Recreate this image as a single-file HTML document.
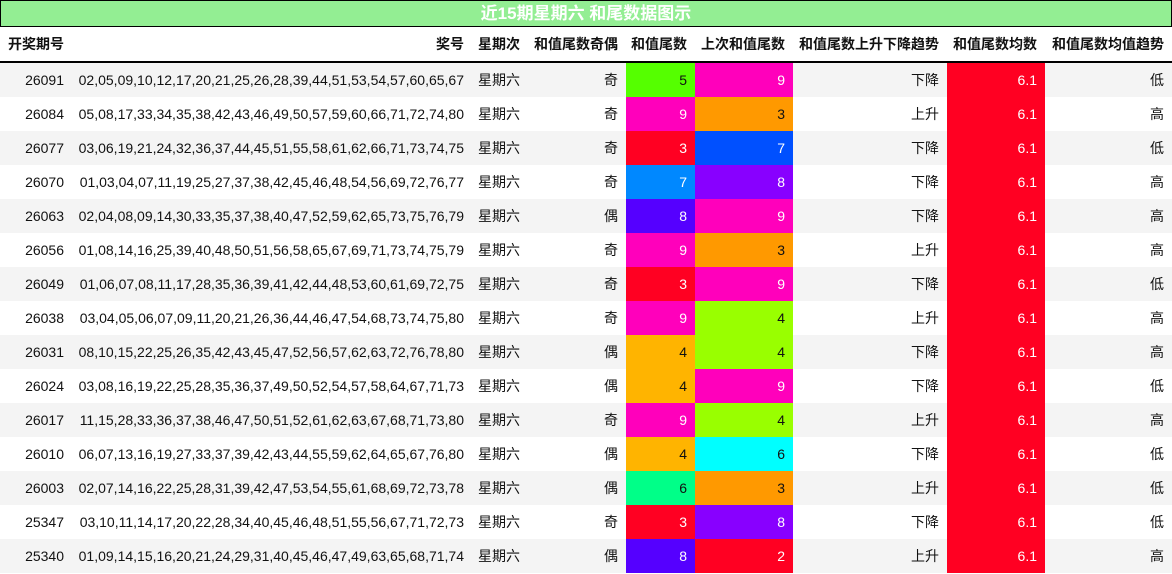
<!DOCTYPE html>
<html><head><meta charset="utf-8"><style>
body{margin:0;width:1172px;height:574px;overflow:hidden;background:#fff;font-family:"Liberation Sans","Noto Sans CJK SC",sans-serif;font-size:14px;color:#111}
.t{position:absolute;left:0;top:0;width:1170px;height:25px;background:#93ee93;border:1px solid #000;color:#fff;font-weight:bold;font-size:17px;text-align:center;line-height:26px}
table{position:absolute;left:0;top:27px;border-collapse:collapse;table-layout:fixed;width:1172px}
th{height:34px;font-weight:bold;font-size:14px;text-align:right;padding:0 8px 0 0;border-bottom:2px solid #000;white-space:nowrap}
td{height:34px;padding:0 8px 0 0;text-align:right;white-space:nowrap}
tr:nth-child(odd) td{background:#f4f4f4}
tr td.w{color:#fff}
td.c{text-align:center;padding:0}
</style></head><body>
<div class="t">近15期星期六 和尾数据图示</div>
<table>
<colgroup><col style="width:72px"><col style="width:400px"><col style="width:54px"><col style="width:100px"><col style="width:69px"><col style="width:98px"><col style="width:154px"><col style="width:98px"><col style="width:127px"></colgroup>
<thead><tr><th style="text-align:left;padding-left:8px">开奖期号</th><th>奖号</th><th class="c" style="text-align:center;padding:0">星期次</th><th>和值尾数奇偶</th><th>和值尾数</th><th>上次和值尾数</th><th>和值尾数上升下降趋势</th><th>和值尾数均数</th><th>和值尾数均值趋势</th></tr></thead>
<tbody>
<tr><td>26091</td><td>02,05,09,10,12,17,20,21,25,26,28,39,44,51,53,54,57,60,65,67</td><td class="c">星期六</td><td>奇</td><td style="background:#5f0!important">5</td><td class="w" style="background:#f0b!important">9</td><td>下降</td><td class="w" style="background:#f02!important">6.1</td><td>低</td></tr>
<tr><td>26084</td><td>05,08,17,33,34,35,38,42,43,46,49,50,57,59,60,66,71,72,74,80</td><td class="c">星期六</td><td>奇</td><td class="w" style="background:#f0b!important">9</td><td style="background:#f90!important">3</td><td>上升</td><td class="w" style="background:#f02!important">6.1</td><td>高</td></tr>
<tr><td>26077</td><td>03,06,19,21,24,32,36,37,44,45,51,55,58,61,62,66,71,73,74,75</td><td class="c">星期六</td><td>奇</td><td class="w" style="background:#f02!important">3</td><td class="w" style="background:#0050ff!important">7</td><td>下降</td><td class="w" style="background:#f02!important">6.1</td><td>低</td></tr>
<tr><td>26070</td><td>01,03,04,07,11,19,25,27,37,38,42,45,46,48,54,56,69,72,76,77</td><td class="c">星期六</td><td>奇</td><td class="w" style="background:#08f!important">7</td><td class="w" style="background:#80f!important">8</td><td>下降</td><td class="w" style="background:#f02!important">6.1</td><td>高</td></tr>
<tr><td>26063</td><td>02,04,08,09,14,30,33,35,37,38,40,47,52,59,62,65,73,75,76,79</td><td class="c">星期六</td><td>偶</td><td class="w" style="background:#50f!important">8</td><td class="w" style="background:#f0b!important">9</td><td>下降</td><td class="w" style="background:#f02!important">6.1</td><td>高</td></tr>
<tr><td>26056</td><td>01,08,14,16,25,39,40,48,50,51,56,58,65,67,69,71,73,74,75,79</td><td class="c">星期六</td><td>奇</td><td class="w" style="background:#f0b!important">9</td><td style="background:#f90!important">3</td><td>上升</td><td class="w" style="background:#f02!important">6.1</td><td>高</td></tr>
<tr><td>26049</td><td>01,06,07,08,11,17,28,35,36,39,41,42,44,48,53,60,61,69,72,75</td><td class="c">星期六</td><td>奇</td><td class="w" style="background:#f02!important">3</td><td class="w" style="background:#f0b!important">9</td><td>下降</td><td class="w" style="background:#f02!important">6.1</td><td>低</td></tr>
<tr><td>26038</td><td>03,04,05,06,07,09,11,20,21,26,36,44,46,47,54,68,73,74,75,80</td><td class="c">星期六</td><td>奇</td><td class="w" style="background:#f0b!important">9</td><td style="background:#9f0!important">4</td><td>上升</td><td class="w" style="background:#f02!important">6.1</td><td>高</td></tr>
<tr><td>26031</td><td>08,10,15,22,25,26,35,42,43,45,47,52,56,57,62,63,72,76,78,80</td><td class="c">星期六</td><td>偶</td><td style="background:#ffb400!important">4</td><td style="background:#9f0!important">4</td><td>下降</td><td class="w" style="background:#f02!important">6.1</td><td>高</td></tr>
<tr><td>26024</td><td>03,08,16,19,22,25,28,35,36,37,49,50,52,54,57,58,64,67,71,73</td><td class="c">星期六</td><td>偶</td><td style="background:#ffb400!important">4</td><td class="w" style="background:#f0b!important">9</td><td>下降</td><td class="w" style="background:#f02!important">6.1</td><td>低</td></tr>
<tr><td>26017</td><td>11,15,28,33,36,37,38,46,47,50,51,52,61,62,63,67,68,71,73,80</td><td class="c">星期六</td><td>奇</td><td class="w" style="background:#f0b!important">9</td><td style="background:#9f0!important">4</td><td>上升</td><td class="w" style="background:#f02!important">6.1</td><td>高</td></tr>
<tr><td>26010</td><td>06,07,13,16,19,27,33,37,39,42,43,44,55,59,62,64,65,67,76,80</td><td class="c">星期六</td><td>偶</td><td style="background:#ffb400!important">4</td><td style="background:#0ff!important">6</td><td>下降</td><td class="w" style="background:#f02!important">6.1</td><td>低</td></tr>
<tr><td>26003</td><td>02,07,14,16,22,25,28,31,39,42,47,53,54,55,61,68,69,72,73,78</td><td class="c">星期六</td><td>偶</td><td style="background:#0f8!important">6</td><td style="background:#f90!important">3</td><td>上升</td><td class="w" style="background:#f02!important">6.1</td><td>低</td></tr>
<tr><td>25347</td><td>03,10,11,14,17,20,22,28,34,40,45,46,48,51,55,56,67,71,72,73</td><td class="c">星期六</td><td>奇</td><td class="w" style="background:#f02!important">3</td><td class="w" style="background:#80f!important">8</td><td>下降</td><td class="w" style="background:#f02!important">6.1</td><td>低</td></tr>
<tr><td>25340</td><td>01,09,14,15,16,20,21,24,29,31,40,45,46,47,49,63,65,68,71,74</td><td class="c">星期六</td><td>偶</td><td class="w" style="background:#50f!important">8</td><td class="w" style="background:#f02!important">2</td><td>上升</td><td class="w" style="background:#f02!important">6.1</td><td>高</td></tr>
</tbody></table>
</body></html>
